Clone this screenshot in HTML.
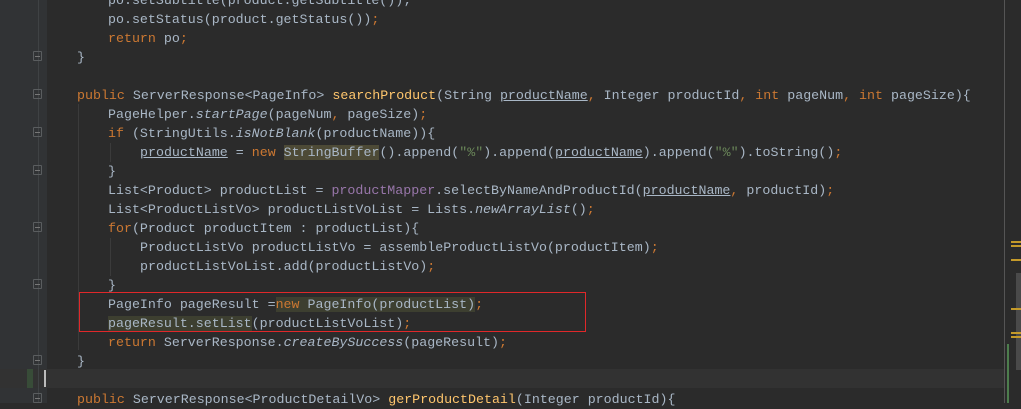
<!DOCTYPE html>
<html><head><meta charset="utf-8"><style>
body{margin:0;width:1021px;height:403px;background:#2b2b2b;overflow:hidden;position:relative;font-family:"Liberation Mono",monospace;}
.gut{position:absolute;left:0;top:0;width:47px;height:403px;background:#313335;}
.cur{position:absolute;left:0;top:369px;width:1005px;height:19px;background:#323232;}
.l{position:absolute;left:0;height:19px;line-height:19px;font-size:13.3px;color:#A9B7C6;white-space:pre;}
.k{color:#CC7832}.m{color:#FFC66D}.s{color:#6A8759}.f{color:#9876AA}.i{font-style:italic}.u{text-decoration:underline}
.h{background:#4d4a36}.h2{background:#3d3f30}
.fold{position:absolute;left:33px;width:9px;height:10px;border:1px solid #5a5d5f;border-radius:1px;box-sizing:border-box;}
.fold:after{content:"";position:absolute;left:1px;top:4px;width:5px;height:1px;background:#777;}
.g{position:absolute;width:1px;background:#3b3b3b;}
</style></head><body>
<div class="gut"></div>
<div class="cur"></div>
<div style="position:absolute;left:38px;top:0;width:1px;height:403px;background:#3f4244"></div>
<div style="position:absolute;left:27px;top:369px;width:6px;height:19px;background:#384c38"></div>
<div style="position:absolute;left:44px;top:370px;width:2px;height:17px;background:#bbb"></div>
<div class="fold" style="top:51px"></div>
<div class="fold" style="top:89px"></div>
<div class="fold" style="top:127px"></div>
<div class="fold" style="top:165px"></div>
<div class="fold" style="top:222px"></div>
<div class="fold" style="top:279px"></div>
<div class="fold" style="top:355px"></div>
<div class="fold" style="top:393px"></div>
<div class="g" style="left:78px;top:104px;height:246px"></div>
<div class="g" style="left:110px;top:143px;height:19px"></div>
<div class="g" style="left:110px;top:238px;height:38px"></div>

<div class="l" style="top:-9px;left:108px">po.setSubtitle(product.getSubtitle());</div>
<div class="l" style="top:10px;left:108px">po.setStatus(product.getStatus())<span class="k">;</span></div>
<div class="l" style="top:29px;left:108px"><span class="k">return</span> po<span class="k">;</span></div>
<div class="l" style="top:48px;left:77px">}</div>
<div class="l" style="top:86px;left:77px"><span class="k">public</span> ServerResponse&lt;PageInfo&gt; <span class="m">searchProduct</span>(String <span class="u">productName</span><span class="k">,</span> Integer productId<span class="k">, int</span> pageNum<span class="k">, int</span> pageSize){</div>
<div class="l" style="top:105px;left:108px">PageHelper.<span class="i">startPage</span>(pageNum<span class="k">,</span> pageSize)<span class="k">;</span></div>
<div class="l" style="top:124px;left:108px"><span class="k">if</span> (StringUtils.<span class="i">isNotBlank</span>(productName)){</div>
<div class="l" style="top:143px;left:140px"><span class="u">productName</span> = <span class="k">new</span> <span class="h">StringBuffer</span>().append(<span class="s">"%"</span>).append(<span class="u">productName</span>).append(<span class="s">"%"</span>).toString()<span class="k">;</span></div>
<div class="l" style="top:162px;left:108px">}</div>
<div class="l" style="top:181px;left:108px">List&lt;Product&gt; productList = <span class="f">productMapper</span>.selectByNameAndProductId(<span class="u">productName</span><span class="k">,</span> productId)<span class="k">;</span></div>
<div class="l" style="top:200px;left:108px">List&lt;ProductListVo&gt; productListVoList = Lists.<span class="i">newArrayList</span>()<span class="k">;</span></div>
<div class="l" style="top:219px;left:108px"><span class="k">for</span>(Product productItem : productList){</div>
<div class="l" style="top:238px;left:140px">ProductListVo productListVo = assembleProductListVo(productItem)<span class="k">;</span></div>
<div class="l" style="top:257px;left:140px">productListVoList.add(productListVo)<span class="k">;</span></div>
<div class="l" style="top:276px;left:108px">}</div>
<div class="l" style="top:295px;left:108px">PageInfo pageResult =<span class="h2"><span class="k">new</span> PageInfo(productList)</span><span class="k">;</span></div>
<div class="l" style="top:314px;left:108px"><span class="h2">pageResult.setList</span>(productListVoList)<span class="k">;</span></div>
<div class="l" style="top:333px;left:108px"><span class="k">return</span> ServerResponse.<span class="i">createBySuccess</span>(pageResult)<span class="k">;</span></div>
<div class="l" style="top:352px;left:77px">}</div>
<div class="l" style="top:390px;left:77px"><span class="k">public</span> ServerResponse&lt;ProductDetailVo&gt; <span class="m">gerProductDetail</span>(Integer productId){</div>

<div style="position:absolute;left:79px;top:292px;width:507px;height:40px;border:1px solid #e0282a;box-sizing:border-box"></div>

<div style="position:absolute;left:1004px;top:0;width:1px;height:403px;background:#555"></div>
<div style="position:absolute;left:1016px;top:273px;width:5px;height:97px;background:#4a4a4a"></div>
<div style="position:absolute;left:1011px;top:241px;width:10px;height:2px;background:#c49a2a"></div>
<div style="position:absolute;left:1011px;top:245px;width:10px;height:2px;background:#c49a2a"></div>
<div style="position:absolute;left:1011px;top:259px;width:10px;height:2px;background:#c49a2a"></div>
<div style="position:absolute;left:1011px;top:308px;width:10px;height:2px;background:#c49a2a"></div>
<div style="position:absolute;left:1011px;top:332px;width:10px;height:2px;background:#c49a2a"></div>
<div style="position:absolute;left:1011px;top:336px;width:10px;height:2px;background:#c49a2a"></div>
<div style="position:absolute;left:1007px;top:344px;width:2px;height:59px;background:#4d7d4d"></div>
</body></html>
